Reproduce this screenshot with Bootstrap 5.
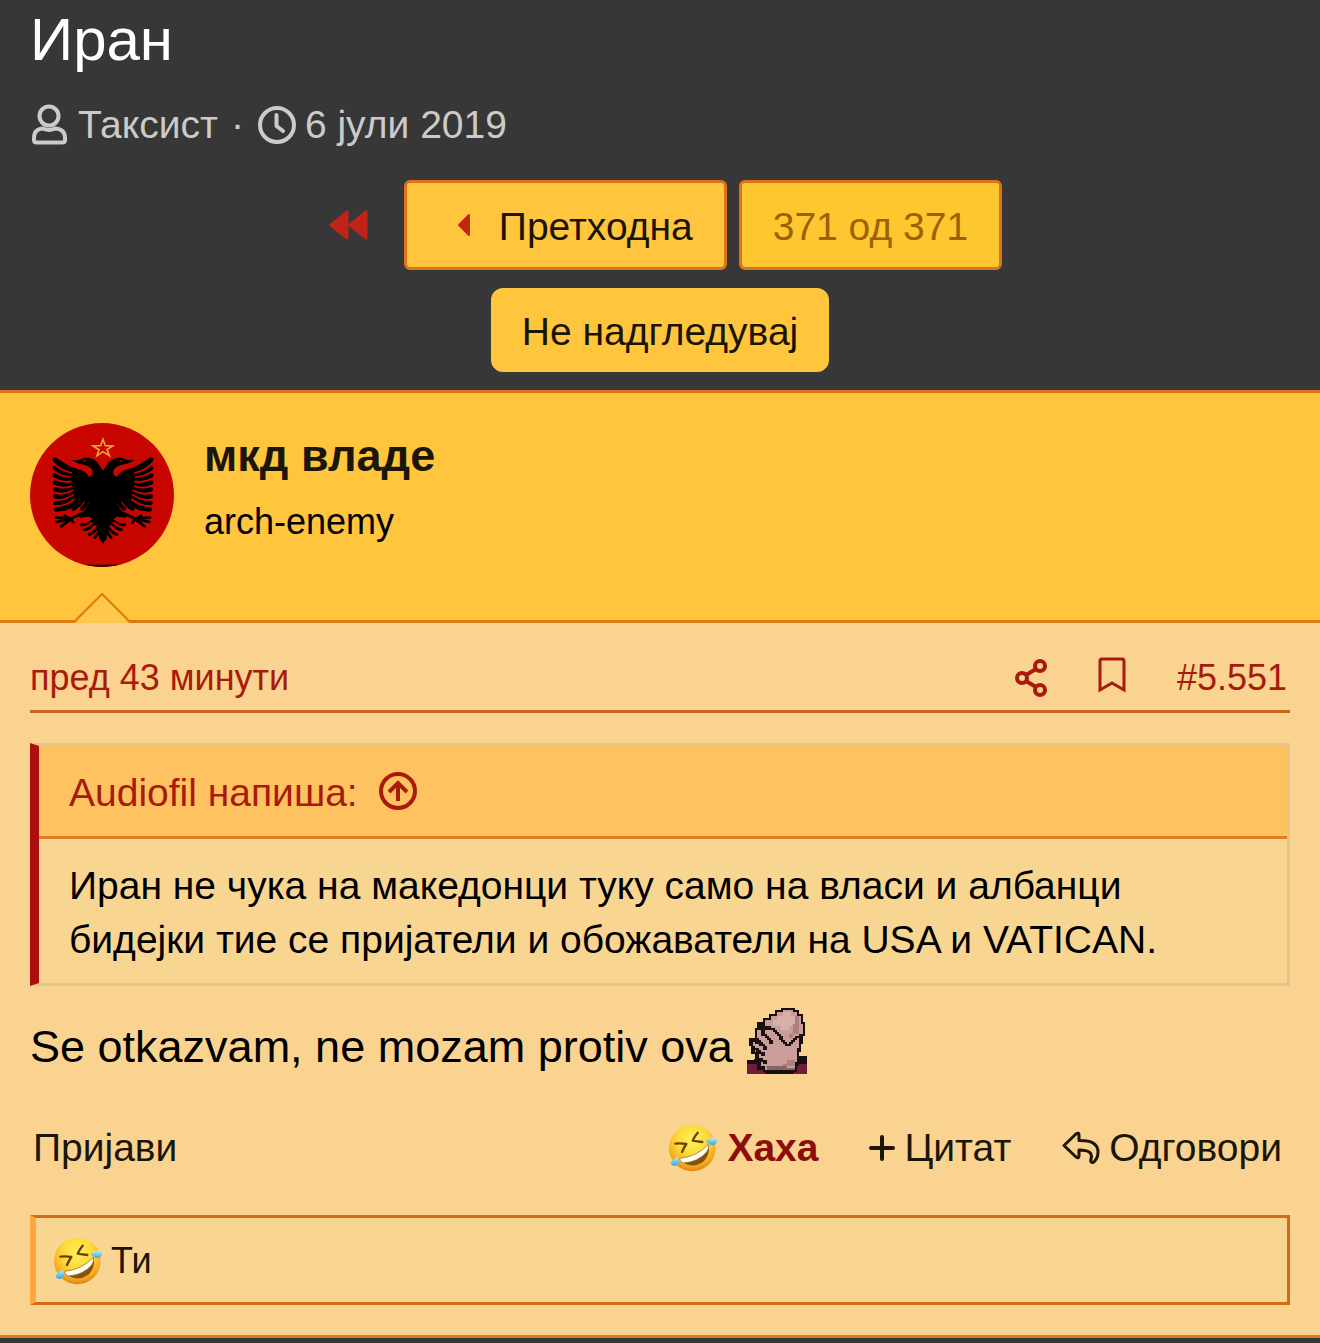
<!DOCTYPE html>
<html lang="mk">
<head>
<meta charset="utf-8">
<meta name="viewport" content="width=device-width, initial-scale=1">
<title>Иран</title>
<link href="https://cdn.jsdelivr.net/npm/bootstrap@5.3.0/dist/css/bootstrap.min.css" rel="stylesheet">
<style>
  body { background: #373737; color: #000; font-family: "Liberation Sans", Arial, sans-serif; font-size: 39px; line-height: 54px; }
  a { text-decoration: none; color: inherit; }
  svg { flex: none; display: block; }
  .gutter { padding-left: 30px; padding-right: 30px; }
  .thread-title { font-size: 60px; line-height: 80px; color: #fff; font-weight: 400; margin: 0 0 18px; }
  .thread-meta { color: #cbcbcb; gap: 13px; }
  .pager { gap: 12px; margin-top: 28px; }
  .skip-link { width: 74px; padding-left: 11px; }
  .btn-forum { --bs-btn-font-size: 39px; --bs-btn-line-height: 54px; --bs-btn-padding-x: 31px; --bs-btn-border-width: 3px; --bs-btn-border-radius: 6px;
    --bs-btn-bg: #ffc53d; --bs-btn-color: #1b1400; --bs-btn-border-color: #dd7318; --bs-btn-hover-bg: #ffcf5c; --bs-btn-hover-border-color: #dd7318;
    padding-top: 17px; padding-bottom: 13px; }
  .btn-count { --bs-btn-bg: #ffc72f; --bs-btn-color: #9a6200; }
  .btn-watch { --bs-btn-border-color: #ffc53d; --bs-btn-padding-x: 28px; --bs-btn-border-radius: 12px; padding-top: 14px; padding-bottom: 10px; margin: 18px 0; }
  .prev-icon { margin-left: 19px; margin-right: 28px; margin-bottom: 4px; }
  .post-user { background: #ffc53d; border-top: 3px solid #dd7318; border-bottom: 3px solid #dd7a10; padding-top: 30px; padding-bottom: 53px; gap: 30px; }
  .user-arrow { left: 74px; bottom: -3px; }
  .user-name { font-size: 45px; line-height: 63px; font-weight: 700; color: #1b1608; margin: 1px 0 9px; }
  .user-rank { font-size: 36px; line-height: 51px; }
  .post-body { background: #fad390; border-bottom: 3px solid #dd7a24; padding-top: 29px; padding-bottom: 30px; }
  .post-attribution { font-size: 36px; line-height: 51px; color: #a81a0c; border-bottom: 3px solid #c6691a; padding-bottom: 7px; padding-right: 3px; margin-bottom: 30px; }
  .post-tools { gap: 51px; }
  .quote-box { border: 3px solid #e0c58c; border-left: 9px solid #ad0e0e; background: #f9d592; margin: 0; }
  .quote-head { background: #ffc261; color: #a81a0c; border-bottom: 3px solid #e07b24; padding: 20px 30px 16px; }
  .quote-head a { gap: 21px; }
  .quote-text { padding: 20px 30px 16px; margin: 0; }
  .post-text { font-size: 45px; line-height: 63px; margin: 22px 0 43px; }
  .smilie { display: inline-block; vertical-align: -12px; margin-left: 2px; }
  .post-actions { color: #1b1608; padding-left: 3px; padding-right: 8px; }
  .action-set { gap: 51px; }
  .action-set a { gap: 9px; }
  .reacted { color: #8c0e0c; font-weight: 700; }
  .reactions { font-size: 36px; line-height: 51px; color: #1b1608; background: #f9d592; border: 3px solid #cf6c18; border-left: 6px solid #ffa73f; padding: 17px 17px 16px; gap: 8px; margin-top: 40px; }
</style>
<script src="https://cdn.jsdelivr.net/npm/bootstrap@5.3.0/dist/js/bootstrap.bundle.min.js"></script>
</head>
<body>
<svg width="0" height="0" class="position-absolute" aria-hidden="true">
  <defs>
    <radialGradient id="face" cx=".5" cy=".32" r=".68"><stop offset="0" stop-color="#fff25c"/><stop offset=".5" stop-color="#fdd835"/><stop offset=".82" stop-color="#f5aa20"/><stop offset="1" stop-color="#dd8213"/></radialGradient>
    <linearGradient id="tear" x1="0" y1="0" x2="0" y2="1"><stop offset="0" stop-color="#b4ecfa"/><stop offset="1" stop-color="#34a5dc"/></linearGradient>
    <symbol id="rofl" viewBox="0 0 150 144">
      <circle cx="73" cy="72" r="70" fill="url(#face)"/>
      <path d="M22 59Q38 57 55 60Q48 70 42 84M89 26Q80 36 74 50Q88 53 103 54" fill="none" stroke="#69420a" stroke-width="7" stroke-linecap="round" stroke-linejoin="round"/>
      <path d="M34 105Q88 101 122 61Q128 93 105 114Q67 139 34 105Z" fill="#86530b"/>
      <path d="M35 103Q87 98 121 61Q125 72 116 84Q91 114 45 117Q33 110 35 103Z" fill="#fffdf2" stroke="#8d6221" stroke-width="2"/>
      <path d="M112 50Q131 38 144 44Q151 55 140 62Q127 67 112 50Z" fill="url(#tear)"/>
      <path d="M28 98Q37 111 29 122Q18 131 9 121Q7 108 28 98Z" fill="url(#tear)"/>
    </symbol>
  </defs>
</svg>

<header class="gutter">
  <h1 class="thread-title">Иран</h1>
  <div class="thread-meta d-flex align-items-center">
    <a href="#" class="d-flex align-items-center gap-2">
      <svg width="40" height="42" viewBox="0 0 40 42" fill="none" stroke="currentColor" stroke-width="4"><circle cx="19" cy="12" r="9.500"/><path d="M13 24.500Q19 27.500 25 24.500Q35 25 35 34V36Q35 38.500 32 38.500H7Q4 38.500 4 36V34Q4 25 13 24.500Z" stroke-linejoin="round"/></svg>
      <span>Таксист</span>
    </a>
    <span>·</span>
    <a href="#" class="d-flex align-items-center gap-2">
      <svg width="40" height="42" viewBox="0 0 40 42" fill="none" stroke="currentColor" stroke-width="4"><circle cx="20" cy="21" r="17"/><path d="M19.500 11V22L26 27" stroke-linecap="round" stroke-linejoin="round"/></svg>
      <time datetime="2019-07-06">6 јули 2019</time>
    </a>
  </div>
  <nav class="pager d-flex justify-content-center align-items-center" aria-label="Страници">
    <a href="#" class="skip-link" aria-label="Прва">
      <svg width="42" height="30" viewBox="0 0 42 30"><path d="M2 15L18 2V28ZM21 15L37 2V28Z" fill="#bf2419" stroke="#bf2419" stroke-width="3" stroke-linejoin="round"/></svg>
    </a>
    <a href="#" class="btn btn-forum d-flex align-items-center">
      <svg class="prev-icon" width="14" height="24" viewBox="0 0 14 24"><path d="M2 12L12 2V22Z" fill="#c3270f" stroke="#c3270f" stroke-width="2" stroke-linejoin="round"/></svg>
      <span>Претходна</span>
    </a>
    <a href="#" class="btn btn-forum btn-count">371 од 371</a>
  </nav>
  <div class="d-flex justify-content-center">
    <button type="button" class="btn btn-forum btn-watch">Не надгледувај</button>
  </div>
</header>

<article>
  <div class="post-user gutter d-flex position-relative">
    <svg width="144" height="144" viewBox="60 69 432 432" role="img" aria-label="мкд владе">
      <clipPath id="disc"><circle cx="276" cy="285" r="216"/></clipPath>
      <g clip-path="url(#disc)">
        <rect x="60" y="69" width="432" height="432" fill="#c90500"/>
        <rect x="60" y="494" width="432" height="8" fill="#180500"/>
        <path d="M279 118L286 137L308 138L291 149L298 167L279 155L261 167L267 149L249 138L272 137Z" fill="none" stroke="#f2a436" stroke-width="5"/>
        <g id="half">
          <path d="M280 214L262 186Q244 170 220 174L206 180L183 181L203 190L222 194Q242 198 248 212Q250 228 236 230Q230 214 205 208Q184 204 168 192L140 174L176 220L188 262L204 296L238 310L222 334L202 341L210 353L238 350L254 362L266 392L268 416L280 432Z"/>
          <g fill="none" stroke="#000" stroke-width="14" stroke-linecap="round">
            <path d="M135 179Q156 205 200 214M135 204Q154 222 200 226M135 226Q158 241 200 238M135 247Q162 260 200 251M136 268Q166 278 204 262M136 289Q170 296 208 272M137 309Q172 312 208 284M139 328Q176 326 208 294"/>
            <path d="M164 327Q188 318 208 294M190 327Q206 318 220 298M216 326Q228 316 234 300" stroke-width="12"/>
            <path d="M214 374Q236 376 254 358M224 389Q244 386 260 366M238 403Q254 398 266 378M255 412Q266 402 272 384" stroke-width="9"/>
            <path d="M212 343L184 355L138 353M184 356L140 366M182 358L154 379M180 357L164 347M184 358L190 368" stroke-width="8"/>
          </g>
          <path d="M216 183L230 180L225 186Z" fill="#c90500"/>
          <path d="M134 193Q150 211 186 219M134 215Q152 230 184 231M134 237Q156 249 184 244M134 258Q158 268 186 258M134 279Q162 286 190 270M135 299Q162 303 192 283M136 319Q168 319 194 297M210 364Q226 366 240 354M218 382Q234 381 246 367M232 396Q246 390 254 376" fill="none" stroke="#c90500" stroke-width="5"/>
        </g>
        <use href="#half" transform="translate(558 0) scale(-1 1)"/>
      </g>
    </svg>
    <div>
      <h2 class="user-name"><a href="#">мкд владе</a></h2>
      <div class="user-rank">arch-enemy</div>
    </div>
    <svg class="user-arrow position-absolute" width="56" height="31" viewBox="0 0 56 31"><path d="M1 31L28 3L55 31Z" fill="#ffc84c"/><path d="M1 29L28 2L55 29" fill="none" stroke="#dd7a10" stroke-width="2"/></svg>
  </div>

  <div class="post-body gutter">
    <div class="post-attribution d-flex justify-content-between">
      <a href="#"><time>пред 43 минути</time></a>
      <div class="post-tools d-flex align-items-center">
        <a href="#" aria-label="Сподели"><svg width="34" height="38" viewBox="0 0 34 38" fill="none" stroke="currentColor" stroke-width="4"><circle cx="27" cy="7" r="5"/><circle cx="9" cy="19" r="5"/><circle cx="27" cy="31" r="5"/><path d="M13 16L23 10M13 22L23 28"/></svg></a>
        <a href="#" aria-label="Обележи"><svg width="28" height="44" viewBox="0 0 28 44" fill="none" stroke="currentColor" stroke-width="3"><path d="M2 34V5Q2 3 4 3H24Q26 3 26 5V34L14 27Z"/></svg></a>
        <a href="#">#5.551</a>
      </div>
    </div>

    <blockquote class="quote-box">
      <div class="quote-head"><a href="#" class="d-flex align-items-center">
        <span>Audiofil напиша:</span>
        <svg width="38" height="42" viewBox="0 0 38 42" fill="none" stroke="currentColor" stroke-width="4"><circle cx="19" cy="19" r="17"/><path d="M19 29V11M10 20L19 11L28 20"/></svg>
      </a></div>
      <p class="quote-text">Иран не чука на македонци туку само на власи и албанци бидејки тие се пријатели и обожаватели на USA и VATICAN.</p>
    </blockquote>

    <p class="post-text">Se otkazvam, ne mozam protiv ova
      <svg class="smilie" width="60" height="66" viewBox="0 0 30 33" shape-rendering="crispEdges" role="img" aria-label="facepalm">
        <path d="M0 26H3L6 24H30V33H0Z" fill="#171013"/>
        <path d="M0 28H5V31H9V33H0ZM25 28H30V33H23Z" fill="#701c3c"/>
        <path d="M17 0H24V1H26V3H28V7H29V14H28V18H27V22H26V29H25V32H8V30H5V27H4V23H2V19H1V15H4V10H5V7H8V5H11V3H14V1H17Z" fill="#17100f"/>
        <path d="M18 1H23V2H25V4H27V8H28V13H27V14H26V20H25V27H24V31H9V29H7V26H6V22H4V19H3V17H5V11H7V9H9V6H12V4H15V2H18Z" fill="#cb9d99"/>
        <path d="M18 2H22V4H24V9H21V11H17V9H13V6H15V4H18Z" fill="#d8afa9"/>
        <path d="M24 4H26V13H23V15H21V13H23V8H24ZM20 26H24V29H18V28H20Z" fill="#ae7f7f"/>
        <path d="M7 9H12V10H14V11H15V12H16V13H17V14H18V16H19V17H20V18H21V17H22V16H23V15H24V14H26V13H28V15H25V16H24V17H23V18H22V19H19V18H18V17H17V16H16V14H15V13H14V12H13V11H9V12H7ZM7 11H8V12H9V13H10V14H11V15H12V16H13V18H11V16H10V15H9V14H7ZM4 15H6V16H7V17H8V18H9V19H10V21H8V19H6V18H4ZM4 20H6V21H7V22H9V24H7V23H5ZM6 25H8V26H10V28H8V27H6Z" fill="#1c1213"/>
        <path d="M10 29H20V30H24V31H10Z" fill="#8d6265"/>
      </svg>
    </p>

    <div class="post-actions d-flex justify-content-between align-items-center">
      <a href="#">Пријави</a>
      <div class="action-set d-flex">
        <a href="#" class="reacted d-flex align-items-center"><svg width="50" height="48"><use href="#rofl"/></svg><span>Хаха</span></a>
        <a href="#" class="d-flex align-items-center"><svg width="26" height="26" viewBox="0 0 26 26" stroke="currentColor" stroke-width="4" stroke-linecap="round"><path d="M13 2V24M2 13H24"/></svg><span>Цитат</span></a>
        <a href="#" class="d-flex align-items-center"><svg width="38" height="34" viewBox="0 0 38 34" fill="none" stroke="currentColor" stroke-width="3" stroke-linejoin="round"><path d="M2 14.500L14 3Q17 1 17 4V9.500Q36 9 36 21Q36 28 31 31.500Q28 32 29 28Q32 19 17 19V25Q17 28 14 26Z"/></svg><span>Одговори</span></a>
      </div>
    </div>

    <a href="#" class="reactions d-flex align-items-center"><svg width="50" height="48"><use href="#rofl"/></svg><span>Ти</span></a>
  </div>
</article>
</body>
</html>
